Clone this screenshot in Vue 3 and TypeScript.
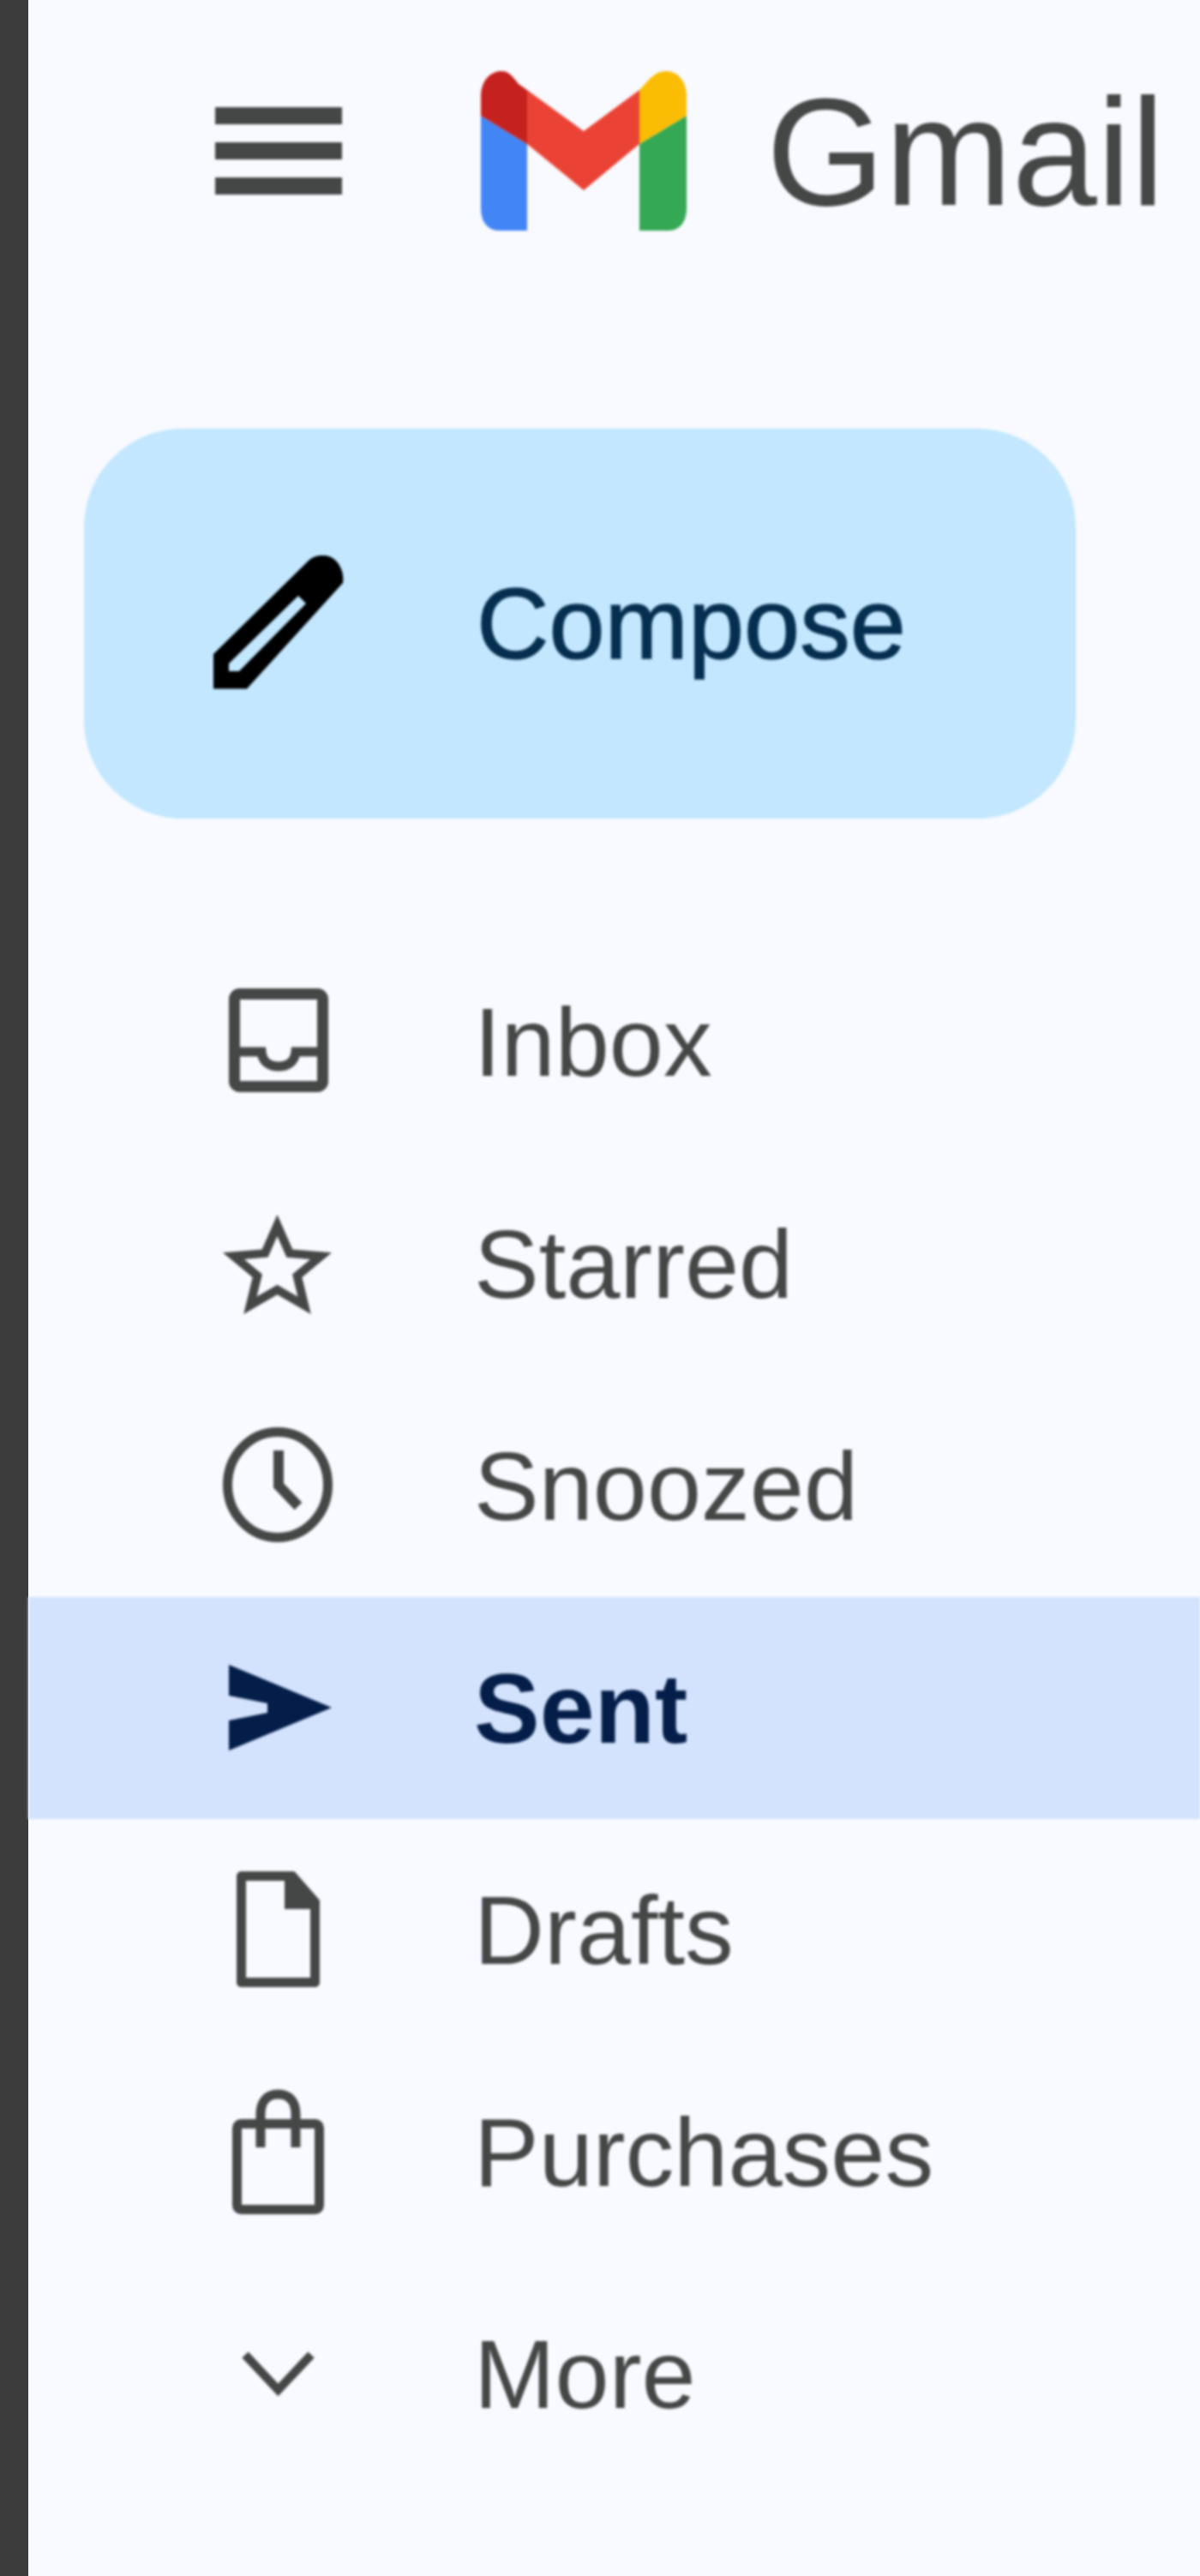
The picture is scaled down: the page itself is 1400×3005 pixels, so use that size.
<script setup lang="ts">
interface NavItem {
  label: string
  icon: string
  active?: boolean
}

const items: NavItem[] = [
  { label: 'Inbox', icon: 'inbox' },
  { label: 'Starred', icon: 'star' },
  { label: 'Snoozed', icon: 'clock' },
  { label: 'Sent', icon: 'sent', active: true },
  { label: 'Drafts', icon: 'draft' },
  { label: 'Purchases', icon: 'bag' },
  { label: 'More', icon: 'more' },
]
</script>

<template>
  <div class="screen">
    <div class="edge"></div>
    <aside class="sidebar">
      <header class="brand">
        <div class="menu"><span></span><span></span><span></span></div>
        <svg class="logo" viewBox="0 0 240 186" aria-label="Gmail logo">
          <path fill="#4285f4" d="M0 52V160C0 176 8 186 22 186H54V85Z" />
          <path fill="#34a853" d="M185 85V186H218C232 186 240 176 240 160V52Z" />
          <path fill="#c5221f" d="M0 52V30C0 10 12 0 24 0 34 0 38 8 44 15L54 22V85Z" />
          <path fill="#fbbc04" d="M185 85V22L196 10C202 4 208 0 216 0 230 0 240 12 240 30V52Z" />
          <path fill="#ea4335" d="M54 22 120 70 185 22V85L120 139 54 85Z" />
        </svg>
        <span class="wordmark">Gmail</span>
      </header>

      <button class="compose" type="button">
        <svg class="slot" viewBox="0 0 155 160">
          <path
            fill="#000"
            fill-rule="evenodd"
            d="M1 155.5V115L112 6C118 -1 132 -2 140 3 148 8 154 20 152 32L40 155.5ZM19 135H31L109 56 100 47 19 126Z"
          />
        </svg>
        <span>Compose</span>
      </button>

      <nav class="nav">
        <a v-for="item in items" :key="item.label" class="row" :class="{ active: item.active }">
          <svg class="slot" viewBox="0 0 155 259">
            <g v-if="item.icon === 'inbox'" fill="none" stroke="currentColor">
              <rect x="25.5" y="73.5" width="103" height="108" rx="6" stroke-width="13" />
              <path stroke-width="11" d="M25 141H57C58 152 66 158 77 158S96 152 97 141H129" />
            </g>
            <path
              v-else-if="item.icon === 'star'"
              fill="currentColor"
              transform="translate(-0.7 59.8) scale(6.35 6.1)"
              d="M22 9.24l-7.19-.62L12 2 9.19 8.63 2 9.24l5.46 4.73L5.82 21 12 17.27 18.18 21l-1.63-7.03L22 9.24zM12 15.4l-3.76 2.27 1-4.28-3.32-2.88 4.38-.38L12 6.1l1.71 4.04 4.38.38-3.32 2.88 1 4.28L12 15.4z"
            />
            <g v-else-if="item.icon === 'clock'" fill="none" stroke="currentColor">
              <ellipse cx="76" cy="128" rx="58.5" ry="61.5" stroke-width="11" />
              <path stroke-width="12" d="M77 88V129L100 153" />
            </g>
            <path
              v-else-if="item.icon === 'sent'"
              fill="currentColor"
              d="M19 79 139 129 19 179V144L64 135V124L19 115Z"
            />
            <g v-else-if="item.icon === 'draft'">
              <path
                fill="none"
                stroke="currentColor"
                stroke-width="11"
                stroke-linejoin="round"
                d="M33.5 66.5H93L119.5 97V190.5H33.5Z"
              />
              <path fill="currentColor" d="M84 61H95L125 95V105H84Z" />
            </g>
            <g v-else-if="item.icon === 'bag'" fill="none" stroke="currentColor" stroke-width="11">
              <rect x="28.5" y="96.5" width="96" height="100" rx="5" />
              <path d="M56 124V85C56 70 64 62 76.5 62S97 70 97 85V124" />
            </g>
            <path
              v-else
              fill="none"
              stroke="currentColor"
              stroke-width="10"
              d="M38 107 76.5 148 115 107"
            />
          </svg>
          <span>{{ item.label }}</span>
        </a>
      </nav>
    </aside>
  </div>
</template>

<style scoped>
.screen {
  display: flex;
  width: 1400px;
  height: 3005px;
  overflow: hidden;
  background: #f8faff;
  font-family: "Liberation Sans", Arial, sans-serif;
}

.edge {
  flex: 0 0 33px;
  background: #3c3c3c;
}

.sidebar {
  flex: 1;
  min-width: 0;
  filter: blur(1.4px);
}

.brand {
  display: flex;
  align-items: center;
  height: 352px;
  padding-left: 218px;
}

.menu {
  display: flex;
  flex-direction: column;
  gap: 21px;
  width: 148px;
  flex: none;
}

.menu span {
  height: 20px;
  background: #444746;
}

.logo {
  flex: none;
  width: 240px;
  height: 186px;
  margin-left: 162px;
}

.wordmark {
  margin: 3px 0 0 93px;
  font-size: 178px;
  line-height: 1;
  color: #444746;
}

.compose {
  display: flex;
  align-items: center;
  gap: 153px;
  width: 1157px;
  height: 455px;
  margin: 148px 0 0 65px;
  padding: 0 0 0 150px;
  border: 0;
  border-radius: 115px;
  background: #c2e7ff;
  color: #062e4f;
  font: 400 117px "Liberation Sans", Arial, sans-serif;
  -webkit-text-stroke: 1.5px #062e4f;
}

.slot {
  flex: none;
  width: 155px;
}

.compose .slot {
  height: 160px;
}

.nav {
  margin-top: 131px;
}

.row {
  display: flex;
  align-items: center;
  gap: 150px;
  height: 259px;
  padding-left: 215px;
  font-size: 113.5px;
  color: #444746;
}

.row .slot {
  height: 259px;
}

.row.active {
  background: #d3e3fd;
  color: #041e49;
  font-size: 115px;
  font-weight: 700;
}
</style>
